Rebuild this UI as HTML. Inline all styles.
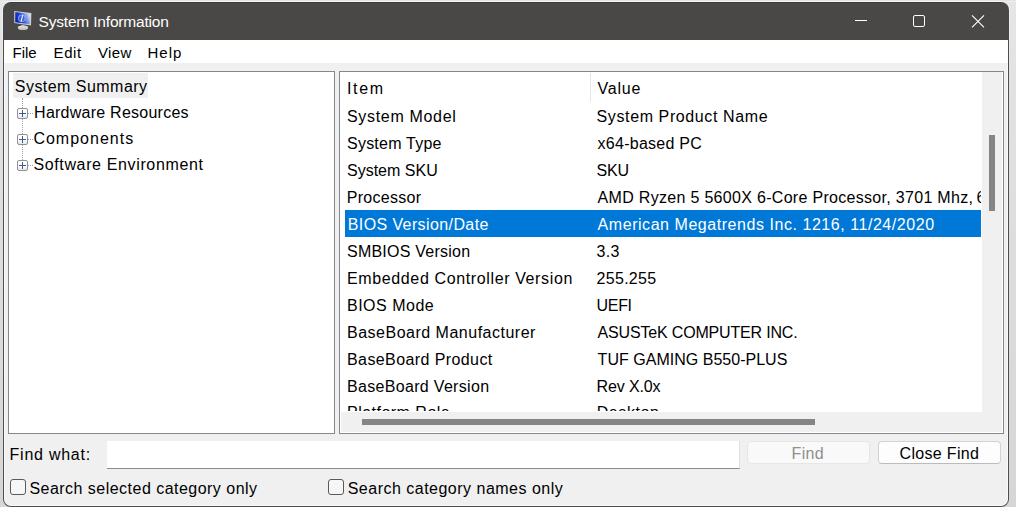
<!DOCTYPE html>
<html><head><meta charset="utf-8">
<style>
html,body{margin:0;padding:0;width:1016px;height:507px;overflow:hidden;background:#e4e4e4;font-family:"Liberation Sans",sans-serif;}
div{box-sizing:border-box;}
.a{position:absolute;}
.t{position:absolute;white-space:nowrap;color:#000;}
</style></head>
<body>
<div class="a" style="left:0;top:0;width:1016px;height:507px;background:linear-gradient(#e6e6e6,#e2e2e2 15%,#dadada 70%,#d6d6d6)"></div>
<div class="a" style="left:0;top:0;width:1016px;height:1px;background:#e3e3e3"></div>
<div class="a" style="left:0;top:1px;width:1016px;height:1px;background:#eeeeee"></div>
<div class="a" style="left:2px;top:1px;width:1008px;height:507px;border-radius:9px;background:linear-gradient(rgba(255,255,255,0.45),rgba(255,255,255,0) 80px)"></div>
<div class="a" style="left:3px;top:2px;width:1006px;height:505px;border-radius:8px;background:linear-gradient(#3e3c3a 0,#3e3c3a 1px,#4a4846 1px,#4a4846 38px,#4f4e4c 38px)"></div>
<div class="a" style="left:4px;top:40px;width:1004px;height:466px;border-radius:0 0 7px 7px;background:#f0f0f0;border:1px solid #fafafa;border-top:0"></div>
<div class="a" style="left:4px;top:40px;width:1004px;height:23px;background:#fff"></div>
<svg class="a" style="left:12px;top:9px" width="22" height="24" viewBox="0 0 22 24">
<defs>
<linearGradient id="scr" x1="0" y1="0.6" x2="1" y2="0.25"><stop offset="0" stop-color="#0a20b8"/><stop offset="0.4" stop-color="#2446d4"/><stop offset="0.75" stop-color="#8ea6ee"/><stop offset="1" stop-color="#dfe6fa"/></linearGradient>
<linearGradient id="stand" x1="0" y1="0" x2="0" y2="1"><stop offset="0" stop-color="#e8e8e8"/><stop offset="1" stop-color="#b8b8b8"/></linearGradient>
</defs>
<path d="M9.5 15.5 L12.5 15.8 L12.8 18.5 L9.2 18.3 Z" fill="#9a9a9a"/>
<ellipse cx="11" cy="18.8" rx="5.2" ry="2.3" fill="url(#stand)"/>
<path d="M2.2 1.9 L19.4 3.9 L19.0 16.4 L2.3 14.1 Z" fill="#d2d2c8"/>
<path d="M3.3 3.1 L18.3 4.9 L18.0 15.3 L3.2 13.2 Z" fill="url(#scr)"/>
<circle cx="9.8" cy="9.3" r="3.4" fill="#3a62d6" fill-opacity="0.85" stroke="#a8bdf0" stroke-width="0.8"/>
<path d="M10.6 6.6 L9.2 12.2" stroke="#f4f8ff" stroke-width="1.1" stroke-linecap="round"/>
</svg>
<div class="t" style="left:38.50px;top:13px;font-size:15.5px;line-height:18px;color:#fff;letter-spacing:-0.182px;">System Information</div>
<div class="a" style="left:855px;top:20px;width:12px;height:1px;background:#fff"></div>
<div class="a" style="left:913px;top:15px;width:12px;height:12px;border:1px solid #fff;border-radius:2px"></div>
<svg class="a" style="left:970px;top:13px" width="16" height="16" viewBox="0 0 16 16"><path d="M2 2.3 L14 14.3 M14 2.3 L2 14.3" stroke="#fff" stroke-width="1.1"/></svg>
<div class="t" style="left:12.50px;top:44px;font-size:15px;line-height:18px;color:#000;">File</div>
<div class="t" style="left:53.60px;top:44px;font-size:15px;line-height:18px;color:#000;letter-spacing:0.567px;">Edit</div>
<div class="t" style="left:98.00px;top:44px;font-size:15px;line-height:18px;color:#000;letter-spacing:0.333px;">View</div>
<div class="t" style="left:147.50px;top:44px;font-size:15px;line-height:18px;color:#000;letter-spacing:1.0px;">Help</div>
<div class="a" style="left:8px;top:71px;width:327px;height:363px;border:1px solid #828790;background:#fff"></div>
<div class="a" style="left:13px;top:73px;width:135px;height:25px;background:#f0f0f0"></div>
<div class="t" style="left:14.80px;top:77px;font-size:16px;line-height:19px;color:#000;letter-spacing:0.462px;">System Summary</div>
<div class="a" style="left:22px;top:98px;width:1px;height:72px;border-left:1px dotted #a0a0a0"></div>
<div class="a" style="left:28px;top:113px;width:5px;height:1px;border-top:1px dotted #a0a0a0"></div>
<div class="a" style="left:17px;top:108px;width:11px;height:11px;border:1px solid #919191;border-radius:2px;background:linear-gradient(#fff,#fff 50%,#e6e6e6)"></div>
<div class="a" style="left:19px;top:113px;width:7px;height:1px;background:#3c5a9c"></div>
<div class="a" style="left:22px;top:110px;width:1px;height:7px;background:#3c5a9c"></div>
<div class="t" style="left:34.10px;top:103px;font-size:16px;line-height:19px;color:#000;letter-spacing:0.247px;">Hardware Resources</div>
<div class="a" style="left:28px;top:139px;width:5px;height:1px;border-top:1px dotted #a0a0a0"></div>
<div class="a" style="left:17px;top:134px;width:11px;height:11px;border:1px solid #919191;border-radius:2px;background:linear-gradient(#fff,#fff 50%,#e6e6e6)"></div>
<div class="a" style="left:19px;top:139px;width:7px;height:1px;background:#3c5a9c"></div>
<div class="a" style="left:22px;top:136px;width:1px;height:7px;background:#3c5a9c"></div>
<div class="t" style="left:33.40px;top:129px;font-size:16px;line-height:19px;color:#000;letter-spacing:1.011px;">Components</div>
<div class="a" style="left:28px;top:165px;width:5px;height:1px;border-top:1px dotted #a0a0a0"></div>
<div class="a" style="left:17px;top:160px;width:11px;height:11px;border:1px solid #919191;border-radius:2px;background:linear-gradient(#fff,#fff 50%,#e6e6e6)"></div>
<div class="a" style="left:19px;top:165px;width:7px;height:1px;background:#3c5a9c"></div>
<div class="a" style="left:22px;top:162px;width:1px;height:7px;background:#3c5a9c"></div>
<div class="t" style="left:33.40px;top:155px;font-size:16px;line-height:19px;color:#000;letter-spacing:0.637px;">Software Environment</div>
<div class="a" style="left:339px;top:71px;width:665px;height:363px;border:1px solid #828790;background:#fff"></div>
<div class="a" style="left:590px;top:73px;width:1px;height:29px;background:#e5e5e5"></div>
<div class="t" style="left:346.90px;top:79px;font-size:16px;line-height:19px;color:#000;letter-spacing:1.7px;">Item</div>
<div class="t" style="left:597.60px;top:79px;font-size:16px;line-height:19px;color:#000;letter-spacing:0.75px;">Value</div>
<div class="a" style="left:340px;top:102px;width:641px;height:309px;overflow:hidden">
<div class="t" style="left:7.00px;top:5px;font-size:16px;line-height:19px;color:#000;letter-spacing:0.673px;">System Model</div>
<div class="t" style="left:256.60px;top:5px;font-size:16px;line-height:19px;color:#000;letter-spacing:0.606px;">System Product Name</div>
<div class="t" style="left:7.00px;top:32px;font-size:16px;line-height:19px;color:#000;letter-spacing:0.23px;">System Type</div>
<div class="t" style="left:257.60px;top:32px;font-size:16px;line-height:19px;color:#000;letter-spacing:0.255px;">x64-based PC</div>
<div class="t" style="left:7.00px;top:59px;font-size:16px;line-height:19px;color:#000;">System SKU</div>
<div class="t" style="left:256.60px;top:59px;font-size:16px;line-height:19px;color:#000;letter-spacing:-0.2px;">SKU</div>
<div class="t" style="left:6.80px;top:86px;font-size:16px;line-height:19px;color:#000;letter-spacing:0.275px;">Processor</div>
<div class="t" style="left:257.60px;top:86px;font-size:16px;line-height:19px;color:#000;letter-spacing:0.305px;">AMD Ryzen 5 5600X 6-Core Processor, 3701 Mhz,</div>
<div class="t" style="left:636.40px;top:86px;font-size:16px;line-height:19px;color:#000;letter-spacing:0.39px;">6 Core(s), 12 Logical Processor(s)</div>
<div class="a" style="left:5px;top:108px;width:636px;height:27px;background:#0078d7"></div>
<div class="t" style="left:7.75px;top:113px;font-size:16px;line-height:19px;color:#fff;letter-spacing:0.397px;">BIOS Version/Date</div>
<div class="t" style="left:257.60px;top:113px;font-size:16px;line-height:19px;color:#fff;letter-spacing:0.547px;">American Megatrends Inc. 1216, 11/24/2020</div>
<div class="t" style="left:7.00px;top:140px;font-size:16px;line-height:19px;color:#000;letter-spacing:0.231px;">SMBIOS Version</div>
<div class="t" style="left:256.60px;top:140px;font-size:16px;line-height:19px;color:#000;letter-spacing:0.3px;">3.3</div>
<div class="t" style="left:7.00px;top:167px;font-size:16px;line-height:19px;color:#000;letter-spacing:0.627px;">Embedded Controller Version</div>
<div class="t" style="left:256.60px;top:167px;font-size:16px;line-height:19px;color:#000;letter-spacing:0.283px;">255.255</div>
<div class="t" style="left:7.00px;top:194px;font-size:16px;line-height:19px;color:#000;letter-spacing:0.5px;">BIOS Mode</div>
<div class="t" style="left:256.60px;top:194px;font-size:16px;line-height:19px;color:#000;letter-spacing:-0.333px;">UEFI</div>
<div class="t" style="left:7.00px;top:221px;font-size:16px;line-height:19px;color:#000;letter-spacing:0.5px;">BaseBoard Manufacturer</div>
<div class="t" style="left:257.60px;top:221px;font-size:16px;line-height:19px;color:#000;letter-spacing:-0.175px;">ASUSTeK COMPUTER INC.</div>
<div class="t" style="left:7.00px;top:248px;font-size:16px;line-height:19px;color:#000;letter-spacing:0.406px;">BaseBoard Product</div>
<div class="t" style="left:257.60px;top:248px;font-size:16px;line-height:19px;color:#000;letter-spacing:0.021px;">TUF GAMING B550-PLUS</div>
<div class="t" style="left:7.00px;top:275px;font-size:16px;line-height:19px;color:#000;letter-spacing:0.319px;">BaseBoard Version</div>
<div class="t" style="left:256.60px;top:275px;font-size:16px;line-height:19px;color:#000;letter-spacing:-0.129px;">Rev X.0x</div>
<div class="t" style="left:7.00px;top:301px;font-size:16px;line-height:19px;color:#000;letter-spacing:0.483px;">Platform Role</div>
<div class="t" style="left:256.70px;top:301px;font-size:16px;line-height:19px;color:#000;letter-spacing:0.6px;">Desktop</div>
</div>
<div class="a" style="left:982px;top:72px;width:20px;height:340px;background:#f0f0f0"></div>
<div class="a" style="left:989px;top:135px;width:6px;height:76px;background:#858585"></div>
<div class="a" style="left:341px;top:412px;width:661px;height:20px;background:#f0f0f0"></div>
<div class="a" style="left:362px;top:419px;width:453px;height:6px;background:#858585"></div>
<div class="t" style="left:9.60px;top:445px;font-size:16px;line-height:19px;color:#000;letter-spacing:0.744px;">Find what:</div>
<div class="a" style="left:107px;top:441px;width:633px;height:28px;background:#fff;border-right:1px solid #e0e0e0;border-bottom:1px solid #8a8a8a"></div>
<div class="a" style="left:747px;top:441px;width:123px;height:23px;background:#f9f9f9;border:1px solid #e6e6e6;border-radius:4px"></div>
<div class="t" style="left:791.60px;top:444px;font-size:16px;line-height:19px;color:#8f8f8f;letter-spacing:0.3px;">Find</div>
<div class="a" style="left:878px;top:441px;width:123px;height:23px;background:#fdfdfd;border:1px solid #d2d2d2;border-bottom-color:#bcbcbc;border-radius:4px"></div>
<div class="t" style="left:899.50px;top:444px;font-size:16px;line-height:19px;color:#000;letter-spacing:0.333px;">Close Find</div>
<div class="a" style="left:10px;top:479px;width:16px;height:16px;border:1px solid #5a5a5a;border-radius:3px;background:#f6f6f6"></div>
<div class="t" style="left:29.40px;top:479px;font-size:16px;line-height:19px;color:#000;letter-spacing:0.475px;">Search selected category only</div>
<div class="a" style="left:328px;top:479px;width:16px;height:16px;border:1px solid #5a5a5a;border-radius:3px;background:#f6f6f6"></div>
<div class="t" style="left:347.70px;top:479px;font-size:16px;line-height:19px;color:#000;letter-spacing:0.492px;">Search category names only</div>
</body></html>
